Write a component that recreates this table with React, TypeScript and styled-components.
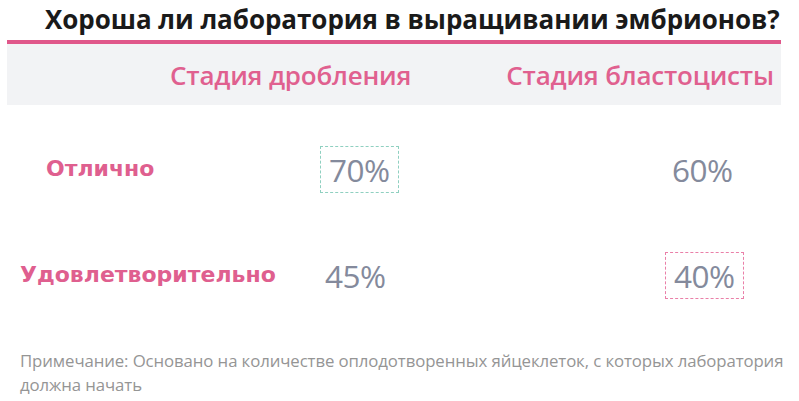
import styled, { createGlobalStyle } from "styled-components";

const Global = createGlobalStyle`
    html, body {
        margin: 0;
        padding: 0;
        background: #ffffff;
    }
    body {
        width: 799px;
        height: 401px;
        overflow: hidden;
        font-family: "Open Sans", "Liberation Sans", sans-serif;
    }
`;

const Page = styled.div`
    width: 799px;
    height: 401px;
    display: flex;
    flex-direction: column;
`;

const Title = styled.h1`
    margin: 0;
    padding: 1px 0 0 45px;
    height: 40px;
    box-sizing: border-box;
    font-size: 26px;
    font-weight: 700;
    letter-spacing: -0.05px;
    color: #1a1a1a;
    line-height: 36px;
    white-space: nowrap;
`;

const HeaderBand = styled.div`
    margin: 0 18px 0 7px;
    border-top: 4px solid #e0578a;
    background: #f2f3f5;
    height: 61px;
    display: flex;
    align-items: center;
`;

const HeaderCell = styled.div<{ $left: number }>`
    margin-left: ${(p) => p.$left}px;
    font-size: 26px;
    font-weight: 600;
    letter-spacing: -0.2px;
    color: #e0608f;
    white-space: nowrap;
`;

const Table = styled.div`
    display: grid;
    grid-template-columns: 313px 345px 1fr;
    grid-template-rows: 106px 106px;
    margin-left: 7px;
    padding-top: 40px;
`;

const RowLabel = styled.div<{ $indent: number }>`
    padding-left: ${(p) => p.$indent}px;
    font-family: "DejaVu Sans", Verdana, sans-serif;
    font-weight: 700;
    font-size: 22px;
    color: #df5f8f;
    display: flex;
    align-items: center;
    height: 47px;
`;

const ValueCell = styled.div<{ $frame?: string; $shift?: number; $drop?: number }>`
    justify-self: start;
    margin-left: ${(p) => p.$shift ?? 0}px;
    margin-top: ${(p) => p.$drop ?? 0}px;
    height: 47px;
    box-sizing: border-box;
    padding: 0 8px;
    display: flex;
    align-items: center;
    border: 1.5px dashed ${(p) => p.$frame ?? "transparent"};
    font-size: 31.5px;
    color: #848a9c;
    letter-spacing: -0.5px;
`;

const Note = styled.p`
    margin: -8px 0 0 0;
    padding: 0 6px 0 20px;
    font-size: 16.8px;
    line-height: 24px;
    color: #959595;
    letter-spacing: -0.1px;
`;

export default function App() {
    return (
        <Page>
            <Global />
            <Title>Хороша ли лаборатория в выращивании эмбрионов?</Title>
            <HeaderBand>
                <HeaderCell $left={163}>Стадия дробления</HeaderCell>
                <HeaderCell $left={95}>Стадия бластоцисты</HeaderCell>
            </HeaderBand>
            <Table>
                <RowLabel $indent={39}>Отлично</RowLabel>
                <ValueCell $frame="#8fd0c0" $drop={1}>70%</ValueCell>
                <ValueCell $shift={-2} $drop={1}>60%</ValueCell>
                <RowLabel $indent={13}>Удовлетворительно</RowLabel>
                <ValueCell $shift={-4} $drop={1}>45%</ValueCell>
                <ValueCell $frame="#ea7fa8" $drop={1}>40%</ValueCell>
            </Table>
            <Note>
                Примечание: Основано на количестве оплодотворенных яйцеклеток, с которых лаборатория должна начать
            </Note>
        </Page>
    );
}
